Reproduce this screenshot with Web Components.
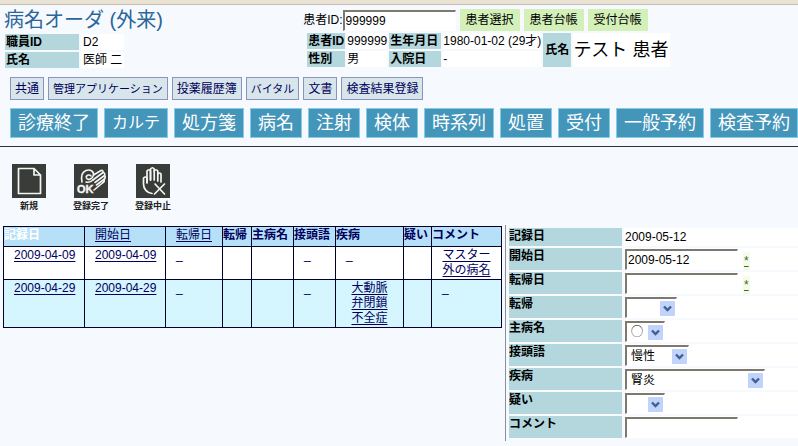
<!DOCTYPE html>
<html lang="ja">
<head>
<meta charset="utf-8">
<title>病名オーダ (外来)</title>
<style>
  html { background: #f6fafe; }
  body {
    margin: 0;
    color: #000;
    font: 12px/16px "Liberation Sans", "Noto Sans CJK JP", sans-serif;
    --label: #b3d7dc;
    --navy: #00005c;
  }
</style>
</head>
<body>
<order-page></order-page>

<script>
const define = (name, html, setup) => {
  const template = document.createElement('template');
  template.innerHTML = html;
  customElements.define(name, class extends HTMLElement {
    constructor() {
      super();
      this.attachShadow({ mode: 'open' }).append(template.content.cloneNode(true));
    }
    connectedCallback() {
      if (setup) setup(this, this.shadowRoot);
    }
  });
};

/* Small grey-blue shortcut button */
define('mini-button', `
<style>
  :host { display: block; flex: none; }
  button { display: block; margin: 0; padding: 0 4px; height: 23px; border: 1px solid #8b94bd;
    background: #d8e6eb; color: var(--navy); font: inherit; line-height: 20px; white-space: nowrap; }
  :host([kana]) button { font-size: 11px; }
</style>
<button type="button"><slot></slot></button>`);

/* Large blue navigation button */
define('nav-button', `
<style>
  :host { display: block; flex: none; }
  button { display: block; margin: 0; padding: 0 7px; height: 30px; border: 1px solid #86cbe6;
    background: #4495ba; color: #fff; font: inherit; font-size: 18px; line-height: 26px; white-space: nowrap; }
  :host([kana]) button { font-size: 16px; }
</style>
<button type="button"><slot></slot></button>`);

/* Pale green header button */
define('green-button', `
<style>
  :host { display: block; flex: none; }
  button { display: block; margin: 0; padding: 0 6px; height: 22px; border: 0;
    background: #d3f0b8; color: #000; font: inherit; line-height: 20px; white-space: nowrap; }
</style>
<button type="button"><slot></slot></button>`);

/* Icon with a caption below */
define('icon-action', `
<style>
  :host { display: block; width: 40px; }
  button { display: flex; flex-direction: column; align-items: center; gap: 2px; width: 100%;
    margin: 0; padding: 0; border: 0; background: none; color: #222;
    font: bold 9px/12px "Noto Sans CJK JP", sans-serif; white-space: nowrap; }
  ::slotted(svg) { display: block; width: 34px; height: 34px; }
</style>
<button type="button"><slot name="icon"></slot><span><slot></slot></span></button>`);

/* Top title and staff / patient information */
define('page-header', `
<style>
  :host { display: grid; grid-template-columns: 38% 1fr; padding-top: 4px; }
  h1 { margin: 0 0 1px; padding-left: 4px; font-size: 20px; line-height: 22px; font-weight: normal; color: #2a659c; }
  table { border-collapse: separate; border-spacing: 2px; }
  th, td { padding: 0 1px; height: 16px; line-height: 16px; text-align: left; white-space: nowrap; }
  th { background: var(--label); }
  td { background: #fff; padding: 0 2px; }
  .staff { margin-left: 3px; }
  .staff th { width: 72px; }
  .staff td { width: 39px; }
  .search { display: flex; align-items: center; gap: 4px; }
  .field { display: flex; align-items: center; }
  input { box-sizing: border-box; width: 113px; height: 21px; margin: 0; padding: 0 1px; border: solid #fff;
    border-width: 2px 1px 1px 2px; border-top-color: #7d7970; border-left-color: #7d7970;
    border-radius: 0; background: #fff; font: inherit; outline: 0; }
  .patient { margin-left: 2px; }
  .patient td { padding: 0; }
  .patient .id { width: 36px; }
  .patient .dates { width: 50px; }
  .patient .who { padding: 0 2px; }
  .patient .name { font-size: 18px; padding-right: 2px; }
</style>
<div>
  <h1>病名オーダ (外来)</h1>
  <table class="staff">
    <tr><th scope="row">職員ID</th><td>D2</td></tr>
    <tr><th scope="row">氏名</th><td>医師 二</td></tr>
  </table>
</div>
<div>
  <div class="search">
    <div class="field"><label for="pid">患者ID:</label><input id="pid" value="999999"></div>
    <green-button>患者選択</green-button>
    <green-button>患者台帳</green-button>
    <green-button>受付台帳</green-button>
  </div>
  <table class="patient">
    <tr><th scope="row">患者ID</th><td class="id">999999</td><th scope="row" class="dates">生年月日</th><td>1980-01-02 (29才)</td>
      <th scope="row" rowspan="2" class="who">氏名</th><td rowspan="2" class="name">テスト 患者</td></tr>
    <tr><th scope="row">性別</th><td>男</td><th scope="row">入院日</th><td>-</td></tr>
  </table>
</div>`);

/* Table of registered diseases */
define('disease-table', `
<style>
  :host { display: block; }
  table { width: 100%; border-collapse: collapse; table-layout: fixed; background: #fff; color: var(--navy); }
  th, td { border: 1px solid #000030; padding: 1px 0 1px 10px; text-align: left; vertical-align: top;
    line-height: 15px; white-space: nowrap; }
  th { background: #b6e0f8; padding: 1px 0 3px; }
  th.sort { padding-left: 10px; font-weight: normal; }
  th.current { color: #fff; }
  .alt td { background: #d5f5ff; }
  td.mid { padding-left: 0; text-align: center; }
  a { color: inherit; text-underline-offset: 2px; }
  a.none { text-decoration: none; }
</style>
<table>
  <colgroup>
    <col style="width:81px"><col style="width:81px"><col style="width:57px"><col style="width:29px"><col style="width:42px">
    <col style="width:42px"><col style="width:68px"><col style="width:28px"><col style="width:70px">
  </colgroup>
  <thead>
    <tr><th class="current">記録日</th><th class="sort"><a href="#start">開始日</a></th><th class="sort"><a href="#end">転帰日</a></th>
      <th>転帰</th><th>主病名</th><th>接頭語</th><th>疾病</th><th>疑い</th><th>コメント</th></tr>
  </thead>
  <tbody>
    <tr><td><a href="#1">2009-04-09</a></td><td><a href="#1">2009-04-09</a></td><td><a class="none" href="#1">_</a></td>
      <td></td><td></td><td><a class="none" href="#1">_</a></td><td><a class="none" href="#1">_</a></td><td></td>
      <td class="mid"><a href="#1">マスター<br>外の病名</a></td></tr>
    <tr class="alt"><td><a href="#2">2009-04-29</a></td><td><a href="#2">2009-04-29</a></td><td><a class="none" href="#2">_</a></td>
      <td></td><td></td><td><a class="none" href="#2">_</a></td><td class="mid"><a href="#2">大動脈<br>弁閉鎖<br>不全症</a></td><td></td>
      <td><a class="none" href="#2">_</a></td></tr>
  </tbody>
</table>`);

/* Drop-down with a blue arrow button */
define('blue-select', `
<style>
  :host { display: block; position: relative; }
  select { appearance: none; box-sizing: border-box; display: block; width: 100%; height: 21px; margin: 0;
    padding: 0 18px 0 4px; border: solid #fff; border-width: 2px 1px 1px 2px;
    border-top-color: #7d7970; border-left-color: #7d7970; border-radius: 0;
    background: #fff; color: #000; font: inherit; line-height: 16px; outline: 0; }
  svg { position: absolute; right: 2px; top: 4px; width: 15px; height: 15px; pointer-events: none; }
</style>
<select></select>
<svg viewBox="0 0 15 15" aria-hidden="true">
  <rect width="15" height="15" rx="1" fill="#bfd3fb"/>
  <path d="M4 5.500l3.500 3.500L11 5.500" fill="none" stroke="#42608f" stroke-width="2.400"/>
</svg>`, (host, root) => {
  const select = root.querySelector('select');
  select.setAttribute('aria-label', host.getAttribute('label'));
  select.replaceChildren(new Option(host.getAttribute('value') || ''));
});

/* Entry form of one disease */
define('disease-form', `
<style>
  :host { display: block; }
  form { display: flex; flex-direction: column; gap: 2px; }
  .row { display: grid; grid-template-columns: 113px 1fr; gap: 2px; min-height: 22px; }
  .row.first { min-height: 18px; }
  .key { background: var(--label); font-weight: bold; line-height: 16px; }
  .val { background: #fff; display: flex; align-items: flex-end; gap: 4px; padding-left: 1px; }
  .row.first .val { align-items: center; }
  input { box-sizing: border-box; width: 113px; height: 21px; margin: 0; padding: 0 1px; border: solid #fff;
    border-width: 2px 1px 1px 2px; border-top-color: #7d7970; border-left-color: #7d7970;
    border-radius: 0; background: #fff; font: inherit; outline: 0; }
  .val a { color: #3f6b1c; line-height: 18px; margin-left: 1px; padding: 0 1px; background: #f3fbe9; }
  .w40 { width: 40px; } .w52 { width: 52px; } .w64 { width: 64px; } .w140 { width: 140px; }
</style>
<form>
  <div class="row first"><span class="key">記録日</span><div class="val">2009-05-12</div></div>
  <div class="row"><label class="key" for="start">開始日</label><div class="val"><input id="start" value="2009-05-12"><a href="#cal1">*</a></div></div>
  <div class="row"><label class="key" for="end">転帰日</label><div class="val"><input id="end"><a href="#cal2">*</a></div></div>
  <div class="row"><span class="key">転帰</span><div class="val"><blue-select class="w52" label="転帰"></blue-select></div></div>
  <div class="row"><span class="key">主病名</span><div class="val"><blue-select class="w40" label="主病名" value="◯"></blue-select></div></div>
  <div class="row"><span class="key">接頭語</span><div class="val"><blue-select class="w64" label="接頭語" value="慢性"></blue-select></div></div>
  <div class="row"><span class="key">疾病</span><div class="val"><blue-select class="w140" label="疾病" value="腎炎"></blue-select></div></div>
  <div class="row"><span class="key">疑い</span><div class="val"><blue-select class="w40" label="疑い"></blue-select></div></div>
  <div class="row"><label class="key" for="comment">コメント</label><div class="val"><input id="comment"></div></div>
</form>`);

define('order-page', `
<style>
  :host { display: block; overflow-x: hidden; }
  .edge { height: 5px; background: #e9e1d2; border-bottom: 1px solid #c3bfb6; box-sizing: border-box; }
  .mini { display: flex; gap: 4px; padding: 7px 0 0 10px; }
  .nav { display: flex; gap: 6px; padding: 8px 0 8px 10px; border-bottom: 1px solid #333; }
  .icons { display: flex; gap: 22px; padding: 17px 0 0 9px; }
  .main { display: grid; grid-template-columns: 502px 1fr; gap: 3px; padding-top: 13px; }
  disease-table { padding: 1px 0 0 3px; }
  disease-form { border-left: 1px solid #8a8fa0; padding: 3px 0 3px 3px; }
</style>
<div class="edge"></div>
<page-header></page-header>
<div class="mini">
  <mini-button>共通</mini-button>
  <mini-button kana>管理アプリケーション</mini-button>
  <mini-button>投薬履歴簿</mini-button>
  <mini-button kana>バイタル</mini-button>
  <mini-button>文書</mini-button>
  <mini-button>検査結果登録</mini-button>
</div>
<nav class="nav">
  <nav-button>診療終了</nav-button>
  <nav-button kana>カルテ</nav-button>
  <nav-button>処方箋</nav-button>
  <nav-button>病名</nav-button>
  <nav-button>注射</nav-button>
  <nav-button>検体</nav-button>
  <nav-button>時系列</nav-button>
  <nav-button>処置</nav-button>
  <nav-button>受付</nav-button>
  <nav-button>一般予約</nav-button>
  <nav-button>検査予約</nav-button>
</nav>
<div class="icons">
  <icon-action>
    <svg slot="icon" viewBox="0 0 34 34" aria-hidden="true">
      <rect width="34" height="34" fill="#393c39"/>
      <path d="M6.500 4.500H22L28.500 11V29.500H6.500ZM22 4.500V11H28.500" fill="none" stroke="#f4f6f4" stroke-width="1.700" stroke-linejoin="round"/>
    </svg>新規</icon-action>
  <icon-action>
    <svg slot="icon" viewBox="0 0 34 34" aria-hidden="true">
      <rect width="34" height="34" fill="#393c39"/>
      <g fill="none" stroke="#f4f6f4" stroke-width="1.600" stroke-linecap="round" stroke-linejoin="round">
        <path d="M8 18C7 13 8 8 12 6.500C16 5 20 7 19.500 11C19 14.500 14 17 12.500 14C11.500 11.500 15 10 17 12"/>
        <path d="M19.500 11L27 6.500Q29.500 6 29 8.500L19 16"/>
        <path d="M29 8.500Q31.500 9 30.500 11.500L21 18.500"/>
        <path d="M30.500 11.500Q32 13 30.500 15L22.500 21"/>
        <path d="M30 15.500Q31 17.500 28.500 19L20 26"/>
        <path d="M12 18Q16 19 19 16"/>
      </g>
      <text x="3" y="28.500" font-family="Liberation Sans, sans-serif" font-size="11" fill="#f4f6f4" stroke="#f4f6f4" stroke-width=".4">OK</text>
    </svg>登録完了</icon-action>
  <icon-action>
    <svg slot="icon" viewBox="0 0 34 34" aria-hidden="true">
      <rect width="34" height="34" fill="#393c39"/>
      <g fill="none" stroke="#f4f6f4" stroke-width="1.700" stroke-linecap="round" stroke-linejoin="round">
        <path d="M16 29.500C11 29 7.500 25 7.500 20V14Q9.500 12 11 14V19"/>
        <path d="M11 18V7Q12.700 4.500 14.500 7V16"/>
        <path d="M14.500 16V5Q16.500 2.500 18.200 5V16"/>
        <path d="M18.200 7Q20 4.500 21.800 7V17"/>
        <path d="M21.800 10Q23.500 8 25 10V18"/>
        <path d="M19 20L28.500 30M28.500 20L18.500 30"/>
      </g>
    </svg>登録中止</icon-action>
</div>
<div class="main">
  <disease-table></disease-table>
  <disease-form></disease-form>
</div>`);
</script>
</body>
</html>
